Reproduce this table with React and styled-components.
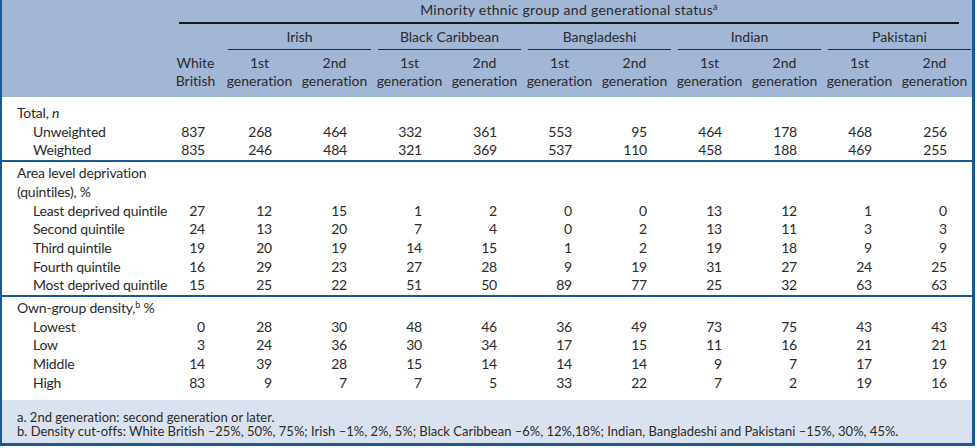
import React from "react";
import styled, { createGlobalStyle } from "styled-components";

const GlobalStyle = createGlobalStyle`
  html, body {
    margin: 0;
    padding: 0;
    background: #ffffff;
  }
  body {
    font-family: "Lato", "Liberation Sans", sans-serif;
    font-variant-ligatures: none;
    font-feature-settings: "liga" 0, "clig" 0;
    color: #2b2a2b;
  }
`;

const BLUE = "#16599a";
const HEAD_BG = "#a2b6d6";
const FOOT_BG = "#dbe2ef";

const Frame = styled.div`
  width: 970px;
  border-left: 2px solid ${BLUE};
  border-right: 3px solid ${BLUE};
  border-bottom: 3px solid ${BLUE};
  font-size: 14px;
  letter-spacing: -0.2px;
`;

const Table = styled.table`
  width: 970px;
  table-layout: fixed;
  border-collapse: collapse;
  border-spacing: 0;
`;

const Head = styled.thead`
  background: ${HEAD_BG};
  letter-spacing: 0;
  th {
    padding: 0;
    font-weight: normal;
  }
`;

const Sup = styled.sup`
  font-size: 9px;
  line-height: 0;
  vertical-align: 5px;
`;

const Title = styled.div`
  height: 22px;
  line-height: 20px;
  margin: 0 13px 0 10px;
  border-bottom: 2px solid #1a1a1a;
  text-align: center;
  letter-spacing: 0.3px;
`;

const Group = styled.div`
  height: 21px;
  padding-top: 4px;
  line-height: 18px;
  margin: 0 1px 0 6px;
  border-bottom: 1px solid #2a2a2a;
  text-align: center;
`;

const GenHead = styled.th`
  line-height: 18px;
  padding: 4px 0 7px 0 !important;
  text-align: center;
  white-space: nowrap;
  vertical-align: top;
`;

const Row = styled.tr`
  td {
    line-height: 18.7px;
    padding-top: ${({ $first, $top }) => ($first ? ($top ? "2px" : "7px") : "0")};
    padding-bottom: ${({ $last }) => ($last ? "7px" : "0")};
    border-top: ${({ $top }) => ($top ? `2px solid ${BLUE}` : "none")};
  }
`;

const Label = styled.td`
  padding-left: ${({ $sub }) => ($sub ? "31px" : "15px")};
  text-align: left;
  white-space: nowrap;
`;

const Num = styled.td`
  text-align: right;
  padding-right: ${({ $wb }) => ($wb ? "17px" : "25px")};
`;

const Notes = styled.div`
  background: ${FOOT_BG};
  height: 33px;
  padding: 10px 0 0 15px;
  font-size: 13px;
  line-height: 14.5px;
  letter-spacing: 0;
`;

const groups = ["Irish", "Black Caribbean", "Bangladeshi", "Indian", "Pakistani"];

const sections = [
  {
    title: (
      <>
        Total, <i>n</i>
      </>
    ),
    rows: [
      ["Unweighted", 837, 268, 464, 332, 361, 553, 95, 464, 178, 468, 256],
      ["Weighted", 835, 246, 484, 321, 369, 537, 110, 458, 188, 469, 255],
    ],
  },
  {
    title: "Area level deprivation",
    title2: "(quintiles), %",
    rows: [
      ["Least deprived quintile", 27, 12, 15, 1, 2, 0, 0, 13, 12, 1, 0],
      ["Second quintile", 24, 13, 20, 7, 4, 0, 2, 13, 11, 3, 3],
      ["Third quintile", 19, 20, 19, 14, 15, 1, 2, 19, 18, 9, 9],
      ["Fourth quintile", 16, 29, 23, 27, 28, 9, 19, 31, 27, 24, 25],
      ["Most deprived quintile", 15, 25, 22, 51, 50, 89, 77, 25, 32, 63, 63],
    ],
  },
  {
    title: (
      <>
        Own-group density,<Sup>b</Sup> %
      </>
    ),
    rows: [
      ["Lowest", 0, 28, 30, 48, 46, 36, 49, 73, 75, 43, 43],
      ["Low", 3, 24, 36, 30, 34, 17, 15, 11, 16, 21, 21],
      ["Middle", 14, 39, 28, 15, 14, 14, 14, 9, 7, 17, 19],
      ["High", 83, 9, 7, 7, 5, 33, 22, 7, 2, 19, 16],
    ],
  },
];

export default function App() {
  return (
    <>
      <GlobalStyle />
      <Frame>
        <Table>
          <colgroup>
            <col style={{ width: 167 }} />
            <col style={{ width: 53 }} />
            {Array.from({ length: 10 }).map((_, i) => (
              <col key={i} style={{ width: 75 }} />
            ))}
          </colgroup>
          <Head>
            <tr>
              <th />
              <th colSpan={11}>
                <Title>
                  Minority ethnic group and generational status<Sup>a</Sup>
                </Title>
              </th>
            </tr>
            <tr>
              <th />
              <th />
              {groups.map((g) => (
                <th colSpan={2} key={g}>
                  <Group>{g}</Group>
                </th>
              ))}
            </tr>
            <tr>
              <th />
              <GenHead>
                White
                <br />
                British
              </GenHead>
              {groups.map((g) =>
                ["1st", "2nd"].map((n) => (
                  <GenHead key={g + n}>
                    {n}
                    <br />
                    generation
                  </GenHead>
                ))
              )}
            </tr>
          </Head>
          {sections.map((s, si) => {
            const last = si === sections.length - 1;
            const total = s.rows.length;
            return (
              <tbody key={si}>
                <Row $top={si > 0} $first>
                  <Label colSpan={12}>{s.title}</Label>
                </Row>
                {s.title2 && (
                  <Row>
                    <Label colSpan={12}>{s.title2}</Label>
                  </Row>
                )}
                {s.rows.map((r, ri) => (
                  <Row key={ri} $last={last && ri === total - 1}>
                    <Label $sub>{r[0]}</Label>
                    {r.slice(1).map((v, vi) => (
                      <Num key={vi} $wb={vi === 0}>
                        {v}
                      </Num>
                    ))}
                  </Row>
                ))}
              </tbody>
            );
          })}
        </Table>
        <Notes>
          <div>a. 2nd generation: second generation or later.</div>
          <div>
            b. Density cut-offs: White British –25%, 50%, 75%; Irish –1%, 2%,
            5%; Black Caribbean –6%, 12%,18%; Indian, Bangladeshi and
            Pakistani –15%, 30%, 45%.
          </div>
        </Notes>
      </Frame>
    </>
  );
}
